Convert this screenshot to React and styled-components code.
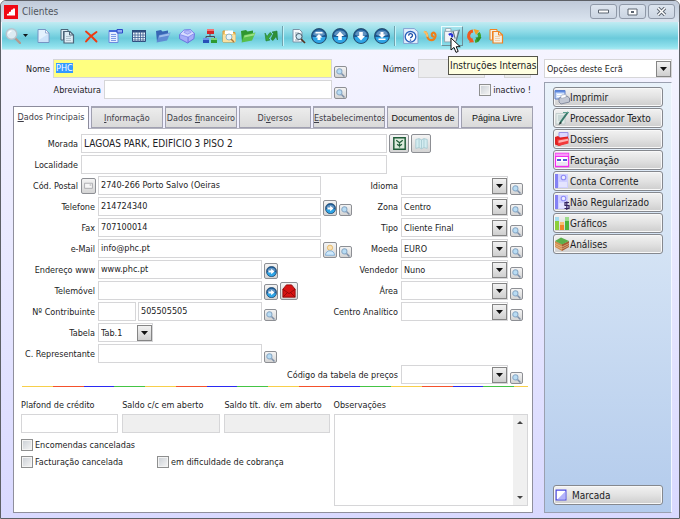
import React from "react";
import styled, { createGlobalStyle, css } from "styled-components";

const GlobalStyle = createGlobalStyle`
  * {
    box-sizing: border-box;
  }
  body {
    margin: 0;
  }
  body, button, input, select, textarea {
    font-family: "DejaVu Sans Condensed", "DejaVu Sans", sans-serif;
    font-size: 9px;
    color: #1c1c24;
  }
  button {
    padding: 0;
    margin: 0;
  }
`;

/* ---------- window ---------- */

const Window = styled.div`
  min-height: 100vh;
  display: flex;
  flex-direction: column;
  border: 1px solid #5d6066;
  border-radius: 6px 6px 0 0;
  overflow: hidden;
  background: linear-gradient(#f8f7ff, #eeeeff 30%, #d9d9ff);
`;

const TitleBar = styled.header`
  height: 21px;
  display: flex;
  align-items: center;
  gap: 4px;
  padding: 0 4px 0 3px;
  background: linear-gradient(#c0cad9, #dbe5f0);
`;

const Title = styled.h1`
  flex: 1;
  margin: 0;
  font-size: 10px;
  font-weight: 400;
  color: #50555e;
`;

const WindowButtons = styled.div`
  display: flex;
  gap: 2px;
`;

const WindowButton = styled.button`
  width: 27px;
  height: 15px;
  display: flex;
  align-items: center;
  justify-content: center;
  border: 1px solid #8f99a8;
  border-radius: 3px;
  background: linear-gradient(#dde5ef, #cbd5e2);
`;

const Toolbar = styled.div`
  height: 28px;
  margin: 0 1px;
  padding-left: 2px;
  display: flex;
  align-items: center;
  gap: 5px;
  border-bottom: 1px solid #c9eaf2;
  background: linear-gradient(#c0ebf2, #8fdbe7 35%, #6acadb 60%, #8fe0ec 90%, #a6e9f2);
`;

const ToolGroup = styled.div`
  display: flex;
  align-items: center;
  gap: ${(p) => p.$gap || 0}px;
`;

const Separator = styled.span`
  width: 2px;
  height: 20px;
  border-left: 1px solid #6fa3ae;
  border-right: 1px solid #c6f2f8;
`;

const ToolButton = styled.button`
  position: relative;
  width: ${(p) => p.$w || 18}px;
  height: 20px;
  display: flex;
  align-items: center;
  justify-content: center;
  border: 0;
  background: none;
  ${(p) =>
    p.$active &&
    css`
      border: 1px solid;
      border-color: #e9fbfd #6c8f98 #6c8f98 #e9fbfd;
    `}
`;

const Tooltip = styled.span`
  position: absolute;
  top: 29px;
  left: 6px;
  z-index: 2;
  padding: 0 1px;
  height: 19px;
  line-height: 17px;
  font-size: 10px;
  white-space: nowrap;
  border: 1px solid #55554a;
  background: #ffffe1;
  color: #222;
`;

const Pointer = styled.svg`
  position: absolute;
  top: 10px;
  left: 8px;
  z-index: 3;
`;

const Body = styled.div`
  flex: 1;
  display: flex;
  gap: 11px;
  padding: 9px 7px 5px 12px;
`;

const Main = styled.main`
  flex: 1;
  min-width: 0;
  display: flex;
  flex-direction: column;
`;

/* ---------- fields ---------- */

const Row = styled.div`
  display: flex;
  align-items: center;
  height: 19px;
  margin-bottom: 2px;
`;

const Label = styled.label`
  flex: none;
  width: ${(p) => p.$w}px;
  margin-right: 3px;
  display: flex;
  justify-content: flex-end;
  white-space: nowrap;
`;

const TextInput = styled.input`
  flex: ${(p) => (p.$w ? "none" : 1)};
  width: ${(p) => (p.$w ? p.$w + "px" : "auto")};
  min-width: 0;
  height: 19px;
  padding: 0 2px 1px;
  border: 1px solid #d6d6d8;
  border-radius: 0;
  outline: 0;
  font-size: ${(p) => (p.$large ? 10 : 9)}px;
  background: ${(p) => p.$bg || "#fff"};
  &::selection {
    background: #3399ff;
    color: #fff;
  }
`;

const Before = styled.div`
  flex: none;
  display: flex;
  margin-right: 2px;
`;

const After = styled.div`
  flex: none;
  width: ${(p) => p.$w}px;
  height: 19px;
  display: flex;
  align-items: flex-end;
  gap: 2px;
  padding-left: 2px;
`;

const SquareButton = styled.button`
  flex: none;
  width: ${(p) => p.$w || 13}px;
  height: ${(p) => p.$h || 12}px;
  display: flex;
  align-items: center;
  justify-content: center;
  border: 1px solid #8d8f94;
  border-radius: 2px;
  background: linear-gradient(#f4f4f4, #d4d4d4);
`;

const SelectBox = styled.div`
  flex: ${(p) => (p.$w ? "none" : 1)};
  width: ${(p) => (p.$w ? p.$w + "px" : "auto")};
  min-width: 0;
  height: 19px;
  display: flex;
  align-items: center;
  border: 1px solid #d6d6d8;
  background: #fff;
`;

const Select = styled.select`
  appearance: none;
  flex: 1;
  min-width: 0;
  height: 17px;
  padding: 0 2px;
  border: 0;
  outline: 0;
  background: none;
`;

const ArrowBox = styled.span`
  width: 15px;
  height: 16px;
  display: flex;
  align-items: center;
  justify-content: center;
  border: 1px solid #858585;
  background: linear-gradient(#f2f2f2, #cfcfcf);
  pointer-events: none;
`;

const Check = styled.label`
  display: flex;
  align-items: center;
  gap: 2px;
  white-space: nowrap;
`;

const CheckInput = styled.input`
  appearance: none;
  width: 12px;
  height: 12px;
  margin: 0;
  border: 1px solid #8e8f8f;
  background: linear-gradient(135deg, #c9ced4, #f6f6f6);
  box-shadow: inset 0 0 0 1px #f4f4f4;
`;

const HeadRow = styled(Row)`
  padding-right: 2px;
`;

const HeadRight = styled.div`
  flex: none;
  width: 184px;
  display: flex;
  align-items: center;
  justify-content: flex-end;
  gap: 3px;
`;

/* ---------- tabs ---------- */

const Tabs = styled.div`
  display: flex;
  align-items: flex-end;
  gap: 2px;
  margin-top: 5px;
  height: 22px;
`;

const Tab = styled.button`
  flex: 72 1 0;
  min-width: 0;
  height: 22px;
  overflow: hidden;
  white-space: nowrap;
  border: 1px solid #a0a0b0;
  border-top: 2px solid #a5a5b4;
  background: linear-gradient(#ececec, #dadada);
  color: #3d3d48;
  ${(p) =>
    p.$plain &&
    css`
      font-family: "Liberation Sans", Arial, sans-serif;
      color: #111;
    `}
  ${(p) =>
    p.$selected &&
    css`
      flex-grow: 76;
      height: 23px;
      margin-bottom: -1px;
      z-index: 1;
      padding-bottom: 2px;
      border: 1px solid #8c8c9c;
      border-bottom: 0;
      background: #fff;
    `}
  u {
    text-underline-offset: 1px;
  }
`;

const Panel = styled.section`
  flex: 1;
  padding: 5px 4px 5px 2px;
  border: 1px solid #8f8f9c;
  border-top-color: #b4b4c0;
  background: #fff;
`;

const LeftCell = styled.div`
  flex: 1;
  min-width: 0;
  display: flex;
  align-items: center;
`;

const RightCell = styled.div`
  flex: none;
  width: 176px;
  display: flex;
  align-items: center;
`;

const Stripes = styled.div`
  height: 1px;
  margin: 1px 0 0 6px;
  background: repeating-linear-gradient(
    90deg,
    #f7cf4a 0 31px,
    #f4512c 31px 62px,
    #2a2af0 62px 92px,
    #45c445 92px 123px
  );
`;

const Bottom = styled.div`
  display: flex;
  gap: 4px;
  margin: 10px 0 0 5px;
`;

const Credit = styled.div`
  flex: 308 1 0;
  min-width: 0;
`;

const Amounts = styled.div`
  display: grid;
  grid-template-columns: 97fr 98fr 105fr;
  column-gap: 4px;
  margin-bottom: 6px;
`;

const Stack = styled.label`
  min-width: 0;
  display: flex;
  flex-direction: column;
  white-space: nowrap;
  line-height: 17px;
`;

const StackInput = styled(TextInput)`
  flex: none;
`;

const Checks = styled.div`
  display: grid;
  grid-template-columns: 136px auto;
  row-gap: 5px;
`;

const Notes = styled(Stack)`
  flex: 194 1 0;
`;

const NotesBox = styled.div`
  height: 92px;
  display: flex;
  border: 1px solid #d6d6d8;
`;

const NotesArea = styled.textarea`
  flex: 1;
  min-width: 0;
  border: 0;
  outline: 0;
  resize: none;
  overflow: hidden;
`;

const ScrollStrip = styled.div`
  width: 14px;
  padding: 6px 0;
  display: flex;
  flex-direction: column;
  align-items: center;
  justify-content: space-between;
  background: #f0f0f0;
`;

/* ---------- side ---------- */

const Side = styled.aside`
  flex: none;
  width: 128px;
  display: flex;
  flex-direction: column;
  gap: 4px;
`;

const SideSelect = styled(SelectBox)`
  flex: none;
`;

const SidePanel = styled.nav`
  flex: 1;
  display: flex;
  flex-direction: column;
  gap: 1px;
  padding: 4px 8px 7px;
  border: 1px solid #9aa0b0;
  border-right-color: #f4f8ff;
  background: linear-gradient(#e9f2fa, #b3cbec);
`;

const SideButton = styled.button`
  height: 20px;
  display: flex;
  align-items: center;
  padding-left: 0;
  font-size: 10px;
  border: 1px solid #85888e;
  border-radius: 3px;
  background: linear-gradient(#f2f2f2, #e2e2e2 50%, #cdcdcd);
  box-shadow: inset 0 0 0 1px #f8f8f8;
  ${(p) =>
    p.$last &&
    css`
      margin-top: auto;
      gap: 5px;
      padding-left: 1px;
    `}
`;

/* ---------- icons ---------- */

const Svg = ({ s = 16, w, h, children }) => (
  <svg width={w || s} height={h || s} viewBox="0 0 16 16" fill="none" aria-hidden="true">
    {children}
  </svg>
);

const Down = () => (
  <svg width="7" height="4" viewBox="0 0 7 4" aria-hidden="true">
    <path d="M0 0h7L3.5 4z" fill="#111" />
  </svg>
);

const LensIcon = () => (
  <Svg s={9}>
    <path d="M8 8l7 7" stroke="#7c8ea6" strokeWidth="2.6" />
    <circle cx="6" cy="6" r="4.6" fill="#b8dcf4" stroke="#8aa9c6" strokeWidth="1.8" />
  </Svg>
);

const BigLens = () => (
  <Svg>
    <path d="M10.500 10.500l4.500 4.500" stroke="#b39a90" strokeWidth="2.400" strokeLinecap="round" />
    <circle cx="6.500" cy="6" r="5.300" fill="#dcebf2" stroke="#b7c3cc" strokeWidth="1.400" />
    <path d="M3.500 5.500a3.500 3.500 0 0 1 3-2.500" stroke="#fff" strokeWidth="1.500" />
  </Svg>
);

const PageIcon = () => (
  <Svg>
    <path d="M3 1.500h7.500L14 5v9.500H3z" fill="#e3f1fd" stroke="#7594c4" />
    <path d="M10.500 1.500V5H14z" fill="#fff" stroke="#7594c4" strokeWidth=".7" />
    <path d="M4 12l9-6v8H4z" fill="#c2dcf6" opacity=".7" />
  </Svg>
);

const PagesIcon = ({ line = "#4d6478", fill = "#dcecf4" }) => (
  <Svg>
    <path d="M2 1.500h7v2H4.500V12H2z" fill={fill} stroke={line} />
    <path d="M5 3.500h6l3.500 3.500v8H5z" fill={fill} stroke={line} strokeWidth="1.200" />
    <path d="M10.500 3.500V7h4" stroke={line} />
    <path d="M7 8.500h5M7 10.500h5M7 12.500h5" stroke={line} strokeWidth=".6" opacity=".5" />
  </Svg>
);

const CrossIcon = () => (
  <Svg>
    <path d="M3 3.500c3 2.500 6 5 10.500 10M13.500 4C9 7 5.500 10 3 13.500" stroke="#ee3b12" strokeWidth="1.900" strokeLinecap="round" />
  </Svg>
);

const FormIcon = () => (
  <Svg>
    <path d="M2 2.500h9v12H2z" fill="#e6efff" stroke="#6c8ae0" />
    <path d="M2 2h8v2H2z" fill="#4468d8" />
    <path d="M10 1.500h5.500v3.500H10z" fill="#8eaaf2" stroke="#2c48c8" />
    <path d="M4 6.500h5M4 8.500h5M4 10.500h5M4 12.500h5" stroke="#7c9be6" />
  </Svg>
);

const TableIcon = () => (
  <Svg>
    <path d="M1.500 2.500h13v11h-13z" fill="#eaf3fb" stroke="#2d4c7c" />
    <path d="M1 2h14v2.500H1z" fill="#2d4c7c" />
    <path d="M1 7h14M1 9.500h14M1 12h14M4 3v11M7 3v11M9.500 3v11M12 3v11" stroke="#3c5e90" strokeWidth=".8" />
  </Svg>
);

const FolderIcon = ({ dark = "#3765b4", mid = "#5f8bd4", light = "#9dbdec" }) => (
  <Svg>
    <path d="M1 3l5-1 1.500 1.500L13 2.500v7L2 14z" fill={dark} />
    <path d="M4 7l11.500-2.500L12 12.500 1.500 14.500z" fill={mid} />
    <path d="M4.500 7.500L15 5.200l-1 2.300L4 9.500z" fill={light} />
  </Svg>
);

const CubeIcon = () => (
  <Svg w={18} h={17}>
    <path d="M1 7l4-4 6-.5L15 6l-.5 5-6 4L1 11z" fill="#a7acf8" stroke="#6268dc" strokeWidth=".8" />
    <path d="M1 7l4-4 6-.5L15 6 9 9.500z" fill="#d8dcff" stroke="#7a80ea" strokeWidth=".7" />
    <path d="M9 9.500V15" stroke="#6268dc" strokeWidth=".8" />
    <path d="M5 5l2-1.500h3L12 5 8.500 6.800z" fill="#b9bdfa" stroke="#7a80ea" strokeWidth=".6" />
  </Svg>
);

const TreeIcon = () => (
  <Svg>
    <path d="M8 6v3M4 11V8.500h8.500V11" stroke="#4a4a55" />
    <rect x="5" y="1" width="7" height="5" fill="#d02828" />
    <rect x="5" y="1" width="7" height="2" fill="#ef7777" />
    <rect x="1" y="10" width="6" height="5" fill="#2850b8" />
    <rect x="1" y="10" width="6" height="2" fill="#6f96ea" />
    <rect x="9" y="10" width="6" height="5" fill="#2d9a32" />
    <rect x="9" y="10" width="6" height="2" fill="#7ed47e" />
  </Svg>
);

const FolderLens = () => (
  <Svg>
    <path d="M2 3h5l1 1.500h6V14H2z" fill="#f3c66a" stroke="#d69a38" />
    <path d="M4 2.500h8V6H4z" fill="#fff" />
    <path d="M2 6.500h12.500V14H2z" fill="#fae0a0" />
    <circle cx="8" cy="9" r="3" fill="#e8f4fb" stroke="#8db6cc" />
    <path d="M10 11l3 3" stroke="#b07838" strokeWidth="1.400" />
  </Svg>
);

const ArrowsIcon = () => (
  <Svg>
    <path d="M2 5l1 8 4-1-1.500-1.500L9 6 7 4.500 4 8.500z" fill="#3aa53c" stroke="#1e7c30" strokeWidth=".6" />
    <path d="M14.500 12L14 3l-5 1 1.500 1.500L8 11l2 1.500 3-4z" fill="#2f8f36" stroke="#1e7c30" strokeWidth=".6" />
  </Svg>
);

const PageLens = () => (
  <Svg>
    <path d="M3 1.500h6.500L12 4v10H3z" fill="#f6fafd" stroke="#7c92a6" />
    <path d="M5 5h4M5 7h3M5 12h4" stroke="#7e93a5" strokeWidth=".8" />
    <circle cx="9" cy="8.500" r="3" fill="#cde6f3" stroke="#48606f" />
    <path d="M11 11l4 4" stroke="#54321f" strokeWidth="1.700" />
  </Svg>
);

const BallIcon = ({ d, s = 16 }) => (
  <Svg s={s}>
    <circle cx="8" cy="8" r="7.500" fill="#1a5a96" stroke="#23425e" strokeWidth=".8" />
    <path d="M1.500 9a6.500 6 0 0 0 13 0z" fill="#2fa5e6" />
    <path d="M2 6.500a6.200 5.500 0 0 1 12 0c-3 2-9 2-12 0z" fill="#7aa7cf" opacity=".75" />
    <path d={d} fill="#fff" />
  </Svg>
);

const HelpIcon = () => (
  <Svg w={17} h={18}>
    <path d="M1.500 1h10L15 4v11H1.500z" fill="#e3eefc" stroke="#7a98ce" strokeWidth=".8" />
    <circle cx="8" cy="8.800" r="5" fill="#fff" stroke="#2b62bc" strokeWidth="1.300" />
    <path d="M6.300 7.600a1.800 1.700 0 1 1 2.600 1.400q-.9.500-.9 1.200M8 11.200v1.200" stroke="#2050a8" strokeWidth="1.300" />
  </Svg>
);

const SwirlIcon = () => (
  <Svg>
    <path
      d="M3 4c1.500.5 2 2 2.300 4 .6 5.500 7.200 5.500 8.200 0 .3-2.500-1.500-4-3-3-1.300 1-.8 3 .5 3.500"
      stroke="#ee7f18"
      strokeWidth="2.200"
      strokeLinecap="round"
    />
    <path d="M2.500 4c1.800.5 2.500 2 2.800 4" stroke="#f9c068" strokeWidth="2" strokeLinecap="round" />
  </Svg>
);

const NotesIcon = () => (
  <Svg w={18} h={17}>
    <path d="M1 4h7v10H1z" fill="#f4f6f8" stroke="#8ba0ac" strokeWidth=".8" />
    <path d="M2 1.500h5V4H2z" fill="#fff" stroke="#8ba0ac" strokeWidth=".8" />
    <path d="M8 4l6-1-2.500 11H7z" fill="#e9eef2" stroke="#8ba0ac" strokeWidth=".8" />
    <path d="M15 2.500L12 13M9 4l2 7" stroke="#5b6e7a" />
    <path d="M5 7.500c2-1.500 4-.5 3 2" stroke="#2430d8" strokeWidth="2" />
  </Svg>
);

const CycleIcon = () => (
  <Svg>
    <path d="M7 3A5 5 0 0 0 5 12.200" stroke="#ee5a20" strokeWidth="3" />
    <path d="M3 14.500l5-.3L6 9.500z" fill="#ee5a20" />
    <path d="M9 13.200A5 5 0 0 0 12.300 5" stroke="#3da52e" strokeWidth="3" />
    <path d="M7.500 1l6 1.500-3.500 4.500z" fill="#f4a126" />
    <path d="M9.500 9.500l6-.5L12 14z" fill="#2b8c26" />
  </Svg>
);

const TOP = "M4.500 4h7v1.600h-7zM8 6l3.500 3.500h-2V12h-3V9.500h-2z";
const UP = "M8 3.500L12 8H9.800v4H6.200V8H4z";
const DOWN = "M8 12.500L4 8h2.200V4h3.600v4H12z";
const END = "M4.500 12h7v-1.600h-7zM8 10L4.500 6.500h2V4h3v2.500h2z";
const PLUS = "M3.500 6.500h4V4l5 4-5 4V9.500h-4z";

const PrinterIcon = () => (
  <Svg>
    <path d="M1 1.500h10V10H1z" fill="#cfe0fb" stroke="#5878c0" />
    <path d="M1 1.500h10v2H1z" fill="#5f8ae0" />
    <path d="M3 5.500h5M3 7.500h3" stroke="#fff" strokeWidth="1.200" />
    <path d="M5 9l8-2 2.500 2v4L7 15l-2-2z" fill="#c3c8d4" stroke="#737c90" strokeWidth=".8" />
    <path d="M7 9.500l5-1.200v-3l-5 1z" fill="#fff" stroke="#8c96aa" strokeWidth=".5" />
  </Svg>
);

const PenIcon = () => (
  <Svg>
    <path d="M2 3.500h9v10.500H2z" fill="#e4ecea" stroke="#b7c6c4" strokeWidth=".7" />
    <path d="M4 6h6M4 8h5M4 10h4" stroke="#9cb4b4" strokeWidth=".7" />
    <path d="M14 2L6 13" stroke="#39786a" strokeWidth="2" />
    <path d="M6 12l-1.500 3L8 13z" fill="#20302c" />
    <path d="M9 2.500h6" stroke="#5da090" />
  </Svg>
);

const DossierIcon = () => (
  <Svg>
    <path d="M5 1.500h9V9H5z" fill="#dcd8ff" stroke="#9c94e6" />
    <path d="M1 6l3-1 2 1.500 8-1v6L5 15l-4-1.500z" fill="#e02020" />
    <path d="M3 8.500L14.500 7v5.500L4.500 15z" fill="#f23a3a" />
    <path d="M4.500 9.500l9.500-1.700v2L4.500 12z" fill="#ffb0b0" />
  </Svg>
);

const InvoiceIcon = () => (
  <Svg>
    <path d="M1.500 1.500h13v13h-13z" fill="#fff" stroke="#f32df0" strokeWidth="1.300" />
    <path d="M1.500 1.500h13V4h-13z" fill="#f99af8" />
    <path d="M1.500 4.500h13" stroke="#f32df0" />
    <path d="M3 8h4M9 8h4" stroke="#1c22c8" strokeWidth="1.600" />
    <path d="M3 11h10M3 13h10" stroke="#c6c6da" strokeWidth=".8" />
  </Svg>
);

const AccountIcon = ({ coin }) => (
  <Svg>
    <path d="M1 1h13v14H1z" fill="#cfcfff" />
    <path d="M1 1h3v14H1z" fill="#8482f4" />
    <circle cx="9.500" cy="4.500" r="2.300" fill="#eef" stroke="#8f8cf4" strokeWidth="1.100" />
    <path d="M5 9h8v5H5z" fill="#e4e4ff" />
    {coin && <path d="M15 8.500h-4v3h4v3h-4.500M12.800 7.500v8.500" stroke="#33235c" strokeWidth="1.200" />}
  </Svg>
);

const ChartIcon = () => (
  <Svg>
    <path d="M1 2h4v13H1z" fill="#8ccf3a" />
    <path d="M6 7h4v8H6z" fill="#f0842c" />
    <path d="M11 2h4v13h-4z" fill="#4cb43c" />
    <path d="M1 2h4v4H1z" fill="#a4dcf0" />
    <path d="M6 7h4v3H6z" fill="#f8c070" />
    <path d="M11 2h4v4h-4z" fill="#9cdc8c" />
  </Svg>
);

const BoxIcon = () => (
  <Svg>
    <path d="M1 5l7 3v7l-7-4z" fill="#d08a4c" />
    <path d="M8 8l7-3v6l-7 4z" fill="#a85a30" />
    <path d="M1 5l6-3.500L15 5 8 8.500z" fill="#5caf4a" />
    <path d="M1 7.500l7 3.500 7-3.500M1 9.500l7 3.500 7-3.500" stroke="#e8c49a" strokeWidth=".7" />
  </Svg>
);

const MarkIcon = () => (
  <Svg s={12}>
    <path d="M1.500 1.500h13v13h-13z" fill="#fff" stroke="#4b4be0" strokeWidth="1.600" />
    <path d="M14 3v11H3z" fill="#b4b4fb" />
  </Svg>
);

const tools = [
  ["Novo", <PageIcon />],
  ["Copiar", <PagesIcon />],
  ["Apagar", <CrossIcon />],
  ["Ficha", <FormIcon />],
  ["Lista", <TableIcon />],
  ["Abrir", <FolderIcon />],
  ["Cubo", <CubeIcon />],
];

const sideItems = [
  ["Imprimir", <PrinterIcon />],
  ["Processador Texto", <PenIcon />],
  ["Dossiers", <DossierIcon />],
  ["Facturação", <InvoiceIcon />],
  ["Conta Corrente", <AccountIcon />],
  ["Não Regularizado", <AccountIcon coin />],
  ["Gráficos", <ChartIcon />],
  ["Análises", <BoxIcon />],
];

const Lookup = () => (
  <SquareButton aria-label="Procurar">
    <LensIcon />
  </SquareButton>
);

const GoButton = () => (
  <SquareButton $w={14} $h={16} aria-label="Ligar">
    <BallIcon d={PLUS} s={11} />
  </SquareButton>
);

const Dropdown = ({ id, value = "", w }) => (
  <SelectBox $w={w}>
    <Select id={id} defaultValue={value}>
      <option>{value}</option>
    </Select>
    <ArrowBox>
      <Down />
    </ArrowBox>
  </SelectBox>
);

const Field = ({ id, label, value, large, labelWidth = 79, before, after, afterWidth = 31, right }) => (
  <Row>
    <LeftCell>
      <Label htmlFor={id} $w={labelWidth}>
        {label}
      </Label>
      {before && <Before>{before}</Before>}
      <TextInput id={id} defaultValue={value} $large={large} />
      <After $w={afterWidth}>{after}</After>
    </LeftCell>
    {right}
  </Row>
);

const Pick = ({ id, label, value }) => (
  <RightCell>
    <Label htmlFor={id} $w={46}>
      {label}
    </Label>
    <Dropdown id={id} value={value} />
    <After $w={20}>
      <Lookup />
    </After>
  </RightCell>
);

const App = () => {
  const nameRef = React.useRef(null);

  React.useEffect(() => {
    nameRef.current.focus();
    nameRef.current.select();
  }, []);

  return (
    <Window>
      <GlobalStyle />
      <TitleBar>
        <svg width="14" height="14" viewBox="0 0 14 14" aria-hidden="true">
          <path d="M0 0h14v14H0z" fill="#f00814" />
          <path d="M3 10.500V9l2-.5V7l2-.5V5l2-.7V3.500h2v7z" fill="#fff" />
        </svg>
        <Title>Clientes</Title>
        <WindowButtons>
          <WindowButton aria-label="Minimizar">
            <svg width="11" height="5" viewBox="0 0 11 5">
              <path d="M.5 1h10v3H.5z" fill="#fff" stroke="#5b6470" />
            </svg>
          </WindowButton>
          <WindowButton aria-label="Maximizar">
            <svg width="11" height="8" viewBox="0 0 11 8">
              <path d="M1 1h9v6H1z" fill="#fff" stroke="#5b6470" />
              <path d="M4 3h3v2H4z" fill="#5b6470" />
            </svg>
          </WindowButton>
          <WindowButton aria-label="Fechar">
            <svg width="11" height="9" viewBox="0 0 11 9">
              <path d="M2 1l7 7M9 1L2 8" stroke="#5b6470" strokeWidth="3.400" />
              <path d="M2 1l7 7M9 1L2 8" stroke="#fff" strokeWidth="1.500" />
            </svg>
          </WindowButton>
        </WindowButtons>
      </TitleBar>

      <Toolbar>
        <ToolGroup>
          <ToolButton aria-label="Procurar">
            <BigLens />
          </ToolButton>
          <ToolButton $w={7} aria-label="Opções de procura">
            <svg width="5" height="3" viewBox="0 0 5 3">
              <path d="M0 0h5L2.500 3z" fill="#10181c" />
            </svg>
          </ToolButton>
        </ToolGroup>
        <ToolGroup $gap={6}>
          {tools.map(([name, icon]) => (
            <ToolButton key={name} aria-label={name}>
              {icon}
            </ToolButton>
          ))}
        </ToolGroup>
        <ToolGroup $gap={1}>
          <ToolButton aria-label="Hierarquia">
            <TreeIcon />
          </ToolButton>
          <ToolButton aria-label="Procurar pasta">
            <FolderLens />
          </ToolButton>
          <ToolButton aria-label="Pasta">
            <FolderIcon dark="#2f9630" mid="#57bf4a" light="#9be084" />
          </ToolButton>
        </ToolGroup>
        <ToolGroup $gap={2}>
          <ToolButton aria-label="Trocar">
            <ArrowsIcon />
          </ToolButton>
          <Separator />
        </ToolGroup>
        <ToolGroup $gap={3}>
          <ToolButton aria-label="Pré-visualizar">
            <PageLens />
          </ToolButton>
          <ToolButton aria-label="Primeiro">
            <BallIcon d={TOP} />
          </ToolButton>
          <ToolButton aria-label="Anterior">
            <BallIcon d={UP} />
          </ToolButton>
          <ToolButton aria-label="Seguinte">
            <BallIcon d={DOWN} />
          </ToolButton>
          <ToolButton aria-label="Último">
            <BallIcon d={END} />
          </ToolButton>
          <Separator />
        </ToolGroup>
        <ToolGroup $gap={2}>
          <ToolButton aria-label="Ajuda">
            <HelpIcon />
          </ToolButton>
          <ToolButton aria-label="Actualizar">
            <SwirlIcon />
          </ToolButton>
          <ToolButton $w={22} $active aria-label="Notas">
            <NotesIcon />
            <Tooltip role="tooltip">Instruções Internas</Tooltip>
            <Pointer width="12" height="17" viewBox="0 0 12 17">
              <path d="M1 1v12l3-2.600 2 5 2.200-1-2-4.700h4z" fill="#fff" stroke="#111" />
            </Pointer>
          </ToolButton>
          <ToolButton aria-label="Sincronizar">
            <CycleIcon />
          </ToolButton>
          <ToolButton $w={22} aria-label="Duplicar">
            <PagesIcon line="#f08322" fill="#f4efe2" />
          </ToolButton>
        </ToolGroup>
      </Toolbar>

      <Body>
        <Main>
          <HeadRow>
            <Label htmlFor="nome" $w={37}>
              Nome
            </Label>
            <TextInput id="nome" ref={nameRef} defaultValue="PHC" $bg="#ffff80" />
            <After $w={15}>
              <Lookup />
            </After>
            <HeadRight>
              <label htmlFor="numero">Número</label>
              <TextInput id="numero" $w={67} $bg="#ececee" readOnly />
              <Lookup />
              <TextInput $w={27} $bg="#ececee" readOnly aria-label="Estabelecimento" />
            </HeadRight>
          </HeadRow>
          <HeadRow>
            <Label htmlFor="abrev" $w={88}>
              Abreviatura
            </Label>
            <TextInput id="abrev" />
            <After $w={15}>
              <Lookup />
            </After>
            <HeadRight>
              <Check>
                <CheckInput type="checkbox" />
                inactivo !
              </Check>
            </HeadRight>
          </HeadRow>

          <Tabs role="tablist">
            <Tab role="tab" aria-selected="true" $selected>
              <u>D</u>ados Principais
            </Tab>
            <Tab role="tab">
              <u>I</u>nformação
            </Tab>
            <Tab role="tab">
              Dados <u>f</u>inanceiro
            </Tab>
            <Tab role="tab">
              Di<u>v</u>ersos
            </Tab>
            <Tab role="tab">
              <u>E</u>stabelecimentos
            </Tab>
            <Tab role="tab" $plain>
              Documentos de
            </Tab>
            <Tab role="tab" $plain>
              Página Livre
            </Tab>
          </Tabs>

          <Panel>
            <Field
              id="morada"
              label="Morada"
              value="LAGOAS PARK, EDIFÍCIO 3 PISO 2"
              large
              labelWidth={62}
              afterWidth={141}
              after={
                <>
                  <SquareButton $w={20} $h={19} aria-label="Mapa">
                    <Svg s={13}>
                      <path d="M1 1h14v14H1z" fill="#dcebdc" stroke="#1f5c38" strokeWidth="1.800" />
                      <path d="M4 4l4 3 4-3M8 7v6M5 9l3 2 3-2" stroke="#1f5c38" strokeWidth="1.600" />
                    </Svg>
                  </SquareButton>
                  <SquareButton $w={20} $h={19} aria-label="Roteiro">
                    <Svg s={13}>
                      <path d="M1 3l4-1 3 1.500L11 2l4 1v11l-4-1-3 1.500L5 13l-4 1z" fill="#d3ecf0" stroke="#a4c8d0" />
                      <path d="M5 2v11M8 3.500v11M11 2v11" stroke="#a4c8d0" />
                    </Svg>
                  </SquareButton>
                </>
              }
            />
            <Field id="localidade" label="Localidade" labelWidth={62} afterWidth={141} />
            <Field
              id="postal"
              label="Cód. Postal"
              value="2740-266 Porto Salvo (Oeiras"
              labelWidth={62}
              before={
                <SquareButton $w={15} $h={16} aria-label="Códigos postais">
                  <Svg s={9}>
                    <path d="M1 4h14v9H1z" fill="#f6f6f6" stroke="#a4a4a8" strokeWidth="1.500" />
                    <path d="M10 6h3v2h-3z" fill="#a4a4a8" />
                  </Svg>
                </SquareButton>
              }
              right={<Pick id="idioma" label="Idioma" />}
            />
            <Field
              id="telefone"
              label="Telefone"
              value="214724340"
              after={
                <>
                  <GoButton />
                  <Lookup />
                </>
              }
              right={<Pick id="zona" label="Zona" value="Centro" />}
            />
            <Field
              id="fax"
              label="Fax"
              value="707100014"
              right={<Pick id="tipo" label="Tipo" value="Cliente Final" />}
            />
            <Field
              id="email"
              label="e-Mail"
              value="info@phc.pt"
              after={
                <>
                  <SquareButton $w={14} $h={16} aria-label="Enviar e-mail">
                    <Svg s={12}>
                      <circle cx="8" cy="5" r="3.500" fill="#fbe2b4" stroke="#e0ae50" />
                      <path d="M2 15c0-8 12-8 12 0z" fill="#cfe8fa" stroke="#6fa6d6" />
                    </Svg>
                  </SquareButton>
                  <Lookup />
                </>
              }
              right={<Pick id="moeda" label="Moeda" value="EURO" />}
            />
            <Field
              id="www"
              label="Endereço www"
              value="www.phc.pt"
              afterWidth={90}
              after={<GoButton />}
              right={<Pick id="vendedor" label="Vendedor" value="Nuno" />}
            />
            <Field
              id="telemovel"
              label="Telemóvel"
              afterWidth={90}
              after={
                <>
                  <GoButton />
                  <SquareButton $w={18} $h={18} aria-label="Enviar mensagem">
                    <Svg s={14}>
                      <path d="M1 6l4-5h6l4 5v9H1z" fill="#d81414" stroke="#8e0808" />
                      <path d="M1 6l7 5 7-5M1 15l5-5M15 15l-5-5" stroke="#8e0808" />
                    </Svg>
                  </SquareButton>
                </>
              }
              right={<Pick id="area" label="Área" />}
            />
            <Field
              id="contribuinte"
              label="Nº Contribuinte"
              value="505505505"
              before={<TextInput $w={38} aria-label="Prefixo" />}
              afterWidth={90}
              after={<Lookup />}
              right={<Pick id="centro" label="Centro Analítico" />}
            />
            <Row>
              <Label htmlFor="tabela" $w={79}>
                Tabela
              </Label>
              <Dropdown id="tabela" value="Tab.1" w={55} />
            </Row>
            <Field
              id="representante"
              label="C. Representante"
              afterWidth={90}
              after={<Lookup />}
              right={<RightCell />}
            />
            <Row>
              <LeftCell />
              <Pick id="precos" label="Código da tabela de preços" />
            </Row>
            <Stripes />

            <Bottom>
              <Credit>
                <Amounts>
                  <Stack>
                    Plafond de crédito
                    <StackInput />
                  </Stack>
                  <Stack>
                    Saldo c/c em aberto
                    <StackInput $bg="#efefef" readOnly />
                  </Stack>
                  <Stack>
                    Saldo tít. dív. em aberto
                    <StackInput $bg="#efefef" readOnly />
                  </Stack>
                </Amounts>
                <Checks>
                  <Check>
                    <CheckInput type="checkbox" />
                    Encomendas canceladas
                  </Check>
                  <span />
                  <Check>
                    <CheckInput type="checkbox" />
                    Facturação cancelada
                  </Check>
                  <Check>
                    <CheckInput type="checkbox" />
                    em dificuldade de cobrança
                  </Check>
                </Checks>
              </Credit>
              <Notes>
                Observações
                <NotesBox>
                  <NotesArea />
                  <ScrollStrip>
                    <svg width="6" height="3" viewBox="0 0 6 3">
                      <path d="M0 3h6L3 0z" fill="#444" />
                    </svg>
                    <svg width="6" height="3" viewBox="0 0 6 3">
                      <path d="M0 0h6L3 3z" fill="#444" />
                    </svg>
                  </ScrollStrip>
                </NotesBox>
              </Notes>
            </Bottom>
          </Panel>
        </Main>

        <Side>
          <SideSelect>
            <Select aria-label="Opções" defaultValue="Opções deste Ecrã">
              <option>Opções deste Ecrã</option>
            </Select>
            <ArrowBox>
              <Down />
            </ArrowBox>
          </SideSelect>
          <SidePanel>
            {sideItems.map(([name, icon]) => (
              <SideButton key={name}>
                {icon}
                {name}
              </SideButton>
            ))}
            <SideButton $last>
              <MarkIcon />
              Marcada
            </SideButton>
          </SidePanel>
        </Side>
      </Body>
    </Window>
  );
};

export default App;
